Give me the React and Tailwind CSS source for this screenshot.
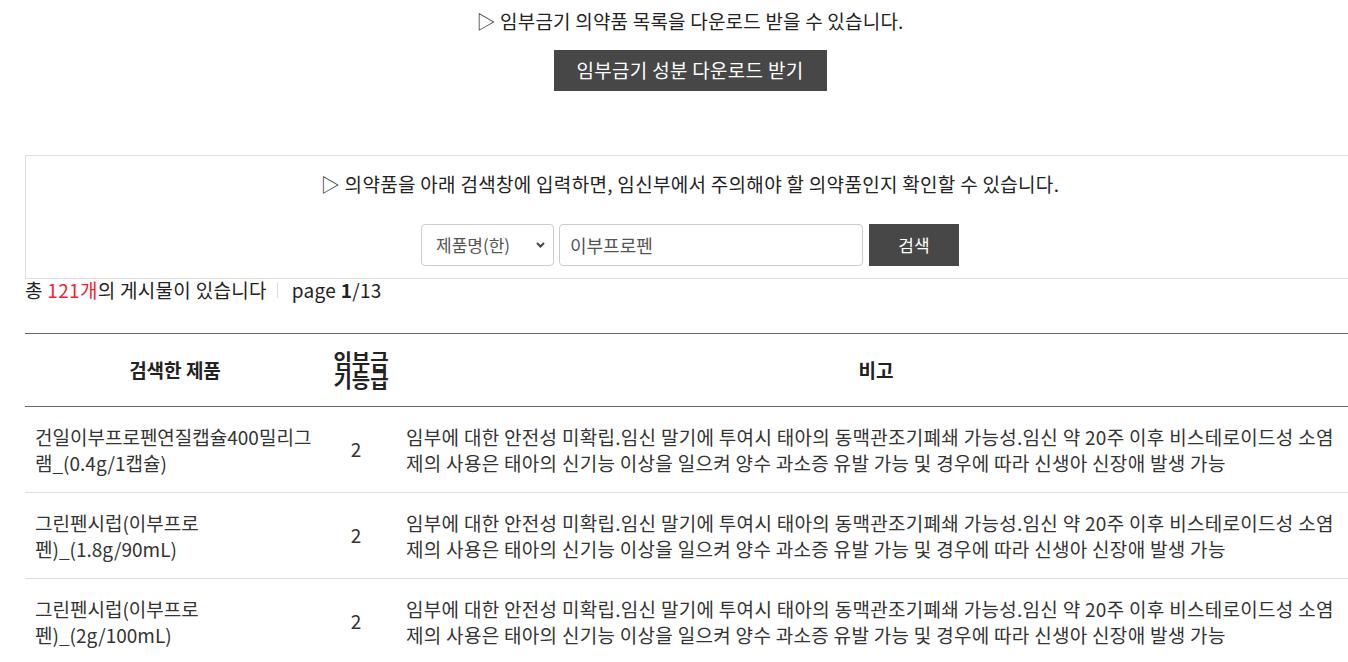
import React, { useState } from 'react';

const rows = [
  { name: '건일이부프로펜연질캡슐400밀리그램_(0.4g/1캡슐)', grade: 2 },
  { name: '그린펜시럽(이부프로펜)_(1.8g/90mL)', grade: 2 },
  { name: '그린펜시럽(이부프로펜)_(2g/100mL)', grade: 2 },
];

const note =
  '임부에 대한 안전성 미확립.임신 말기에 투여시 태아의 동맥관조기폐쇄 가능성.임신 약 20주 이후 비스테로이드성 소염제의 사용은 태아의 신기능 이상을 일으켜 양수 과소증 유발 가능 및 경우에 따라 신생아 신장애 발생 가능';

const App = () => {
  const [kind, setKind] = useState('name');
  const [query, setQuery] = useState('이부프로펜');

  return (
    <div className="w-[1348px] overflow-hidden bg-white font-['Noto_Sans_CJK_KR',sans-serif] text-[#222]">
      <div className="w-[1330px] ml-[25px]">
        {/* 다운로드 안내 */}
        <div className="flex flex-col items-center pt-[7px]">
          <p className="text-[19px] leading-[28px] tracking-[0.2px]">▷ 임부금기 의약품 목록을 다운로드 받을 수 있습니다.</p>
          <button className="mt-[15px] w-[273px] h-[41px] bg-[#474747] text-white text-[19px] tracking-[0.3px]">
            임부금기 성분 다운로드 받기
          </button>
        </div>

        {/* 검색 박스 */}
        <div className="mt-[64px] border border-[#ddd] pt-[14px] pb-[12px] flex flex-col items-center">
          <p className="text-[19px] leading-[27px] tracking-[0.3px]">
            ▷ 의약품을 아래 검색창에 입력하면, 임신부에서 주의해야 할 의약품인지 확인할 수 있습니다.
          </p>
          <div className="mt-[27px] flex gap-[5px]">
            <div className="relative">
              <select
                value={kind}
                onChange={(e) => setKind(e.target.value)}
                className="appearance-none w-[133px] h-[42px] border border-[#ccc] rounded-[4px] pl-[14px] text-[17px] text-[#555] bg-white outline-none"
              >
                <option value="name">제품명(한)</option>
                <option value="ingr">성분명</option>
              </select>
              <svg
                className="absolute right-[9px] top-[18px] pointer-events-none"
                width="9"
                height="6"
                viewBox="0 0 9 6"
              >
                <path d="M1 1l3.5 3.5L8 1" fill="none" stroke="#444" strokeWidth="2" />
              </svg>
            </div>
            <input
              value={query}
              onChange={(e) => setQuery(e.target.value)}
              className="w-[304px] h-[42px] border border-[#ccc] rounded-[4px] px-[10px] text-[18px] text-[#555] outline-none"
            />
            <button className="ml-[1px] w-[90px] h-[42px] bg-[#474747] text-white text-[17px]">검색</button>
          </div>
        </div>

        {/* 게시물 수 */}
        <div className="flex items-center text-[19px] leading-[22px] tracking-[0.3px]">
          <span>
            총 <span className="text-[#f2232f]">121개</span>의 게시물이 있습니다
          </span>
          <span className="mx-[10px] w-px h-[15px] bg-[#ddd]" />
          <span className="ml-[4px]">
            page <b>1</b>/13
          </span>
        </div>

        {/* 결과 테이블 */}
        <table className="mt-[32px] w-full border-collapse table-fixed">
          <colgroup>
            <col className="w-[300px]" />
            <col className="w-[72px]" />
            <col />
          </colgroup>
          <thead>
            <tr className="border-t border-b border-[#666] h-[73px]">
              <th className="text-[19px] font-bold">검색한 제품</th>
              <th className="px-[7px] text-[20px] font-semibold leading-[19px]">임부금기등급</th>
              <th className="text-[19px] font-bold">비고</th>
            </tr>
          </thead>
          <tbody>
            {rows.map((r, i) => (
              <tr key={i} className="border-b border-[#ddd] h-[86px]">
                <td className="px-[10px] text-[19px] leading-[26px] text-[#333]">{r.name}</td>
                <td className="text-center text-[19px] pr-[10px] text-[#333]">{r.grade}</td>
                <td className="px-[9px] text-[19px] leading-[26px] tracking-[0.3px] text-[#333]">{note}</td>
              </tr>
            ))}
          </tbody>
        </table>
      </div>
    </div>
  );
};

export default App;
